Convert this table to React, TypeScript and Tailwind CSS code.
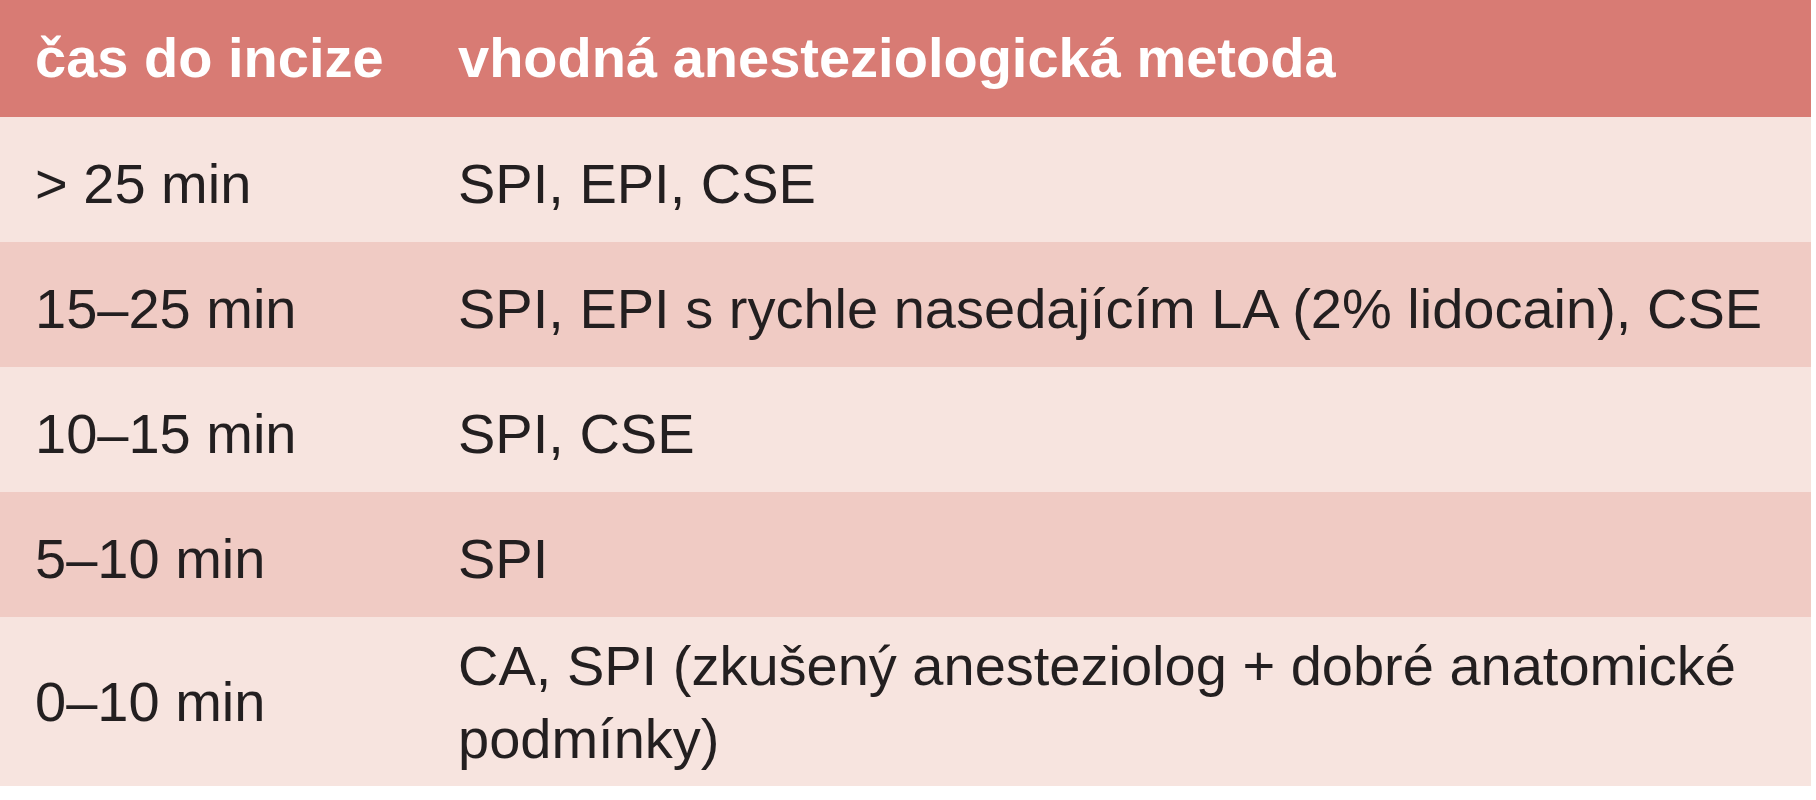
const rows = [
  { time: '> 25 min', method: ['SPI, EPI, CSE'], bg: 'bg-[#f7e4df]' },
  { time: '15–25 min', method: ['SPI, EPI s rychle nasedajícím LA (2% lidocain), CSE'], bg: 'bg-[#f0cbc4]' },
  { time: '10–15 min', method: ['SPI, CSE'], bg: 'bg-[#f7e4df]' },
  { time: '5–10 min', method: ['SPI'], bg: 'bg-[#f0cbc4]' },
  {
    time: '0–10 min',
    method: ['CA, SPI (zkušený anesteziolog + dobré anatomické', 'podmínky)'],
    bg: 'bg-[#f7e4df]',
  },
];

export default function App() {
  return (
    <div className="bg-white w-[1816px] h-[800px] font-['Liberation_Sans',Arial,sans-serif] text-[56px] leading-[73px] text-[#231f20]">
      <div className="w-[1811px]">
        {/* header */}
        <div className="flex items-center h-[117px] pb-[2px] bg-[#d87b74] text-white font-bold">
          <div className="w-[423px] pl-[35px] whitespace-nowrap">čas do incize</div>
          <div className="flex-1 pl-[35px] whitespace-nowrap">vhodná anesteziologická metoda</div>
        </div>

        {rows.map((row, i) => {
          const tall = row.method.length > 1;
          return (
            <div
              key={i}
              className={`flex items-center ${row.bg} ${tall ? 'h-[169px]' : 'h-[125px] pt-[8px]'}`}
            >
              <div className="w-[423px] pl-[35px] whitespace-nowrap">{row.time}</div>
              <div className="flex-1 pl-[35px] whitespace-nowrap">
                {row.method.map((line, j) => (
                  <div key={j}>{line}</div>
                ))}
              </div>
            </div>
          );
        })}
      </div>
    </div>
  );
}
